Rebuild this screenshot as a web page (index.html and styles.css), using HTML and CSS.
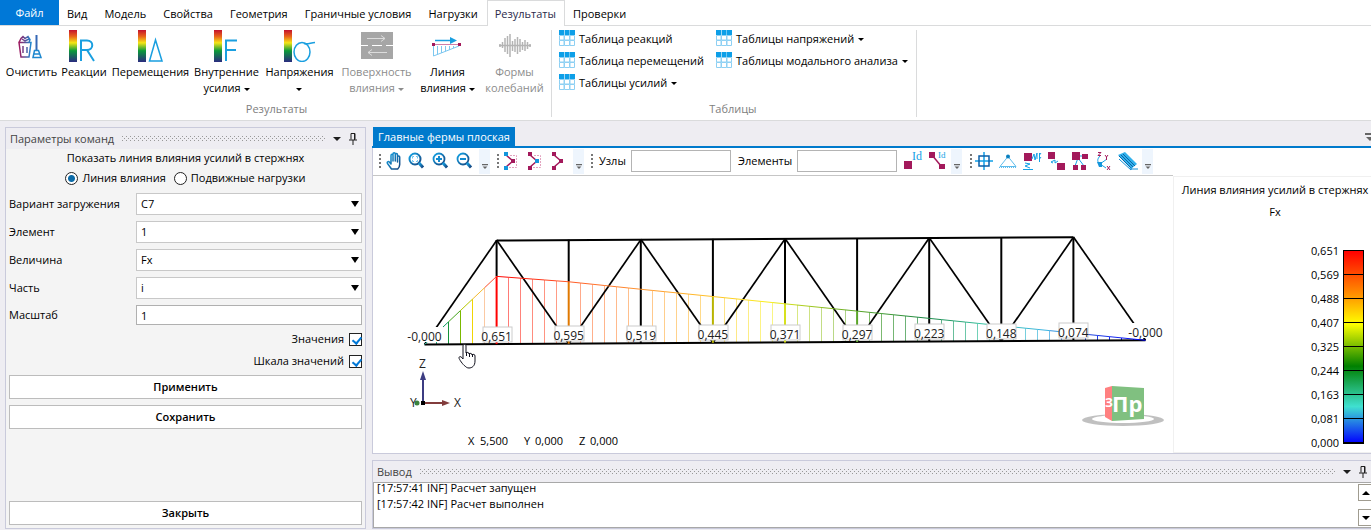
FILE: index.html
```
<!DOCTYPE html>
<html lang="ru">
<head>
    <meta charset="UTF-8">
    <meta name="viewport" content="width=device-width, initial-scale=1.0">
    <title>Главные фермы плоская</title>
    <link rel="stylesheet" href="styles.css">
</head>
<body>

    <!-- Общие значки -->
    <svg class="defs" width="0" height="0" aria-hidden="true">
        <defs>
            <linearGradient id="spectrum" x1="0" y1="0" x2="0" y2="1">
                <stop offset="0" stop-color="#c4122f"/>
                <stop offset=".2" stop-color="#e8641b"/>
                <stop offset=".4" stop-color="#f5e616"/>
                <stop offset=".65" stop-color="#0b9a3a"/>
                <stop offset="1" stop-color="#2b2a80"/>
            </linearGradient>
            <linearGradient id="duo" x1="0" y1="0" x2="1" y2="0">
                <stop offset="0" stop-color="#a0195f"/>
                <stop offset="1" stop-color="#1e88cf"/>
            </linearGradient>
            <linearGradient id="glass" x1="0" y1="0" x2="1" y2="1">
                <stop offset="0" stop-color="#12a5e8"/>
                <stop offset="1" stop-color="#17427c"/>
            </linearGradient>
        </defs>
        <symbol id="i-table" viewBox="0 0 16 16">
            <path fill="#0d9fe8" d="M0 0h5v5H0zM5.600 0h5v5h-5zM11 0h5v5h-5z"/>
            <path fill="none" stroke="#8ed0f3" d="M.5 5.500h4.500v4.500H.5zM5.500 5.500h5v4.500h-5zM11 5.500h4.500v4.500H11zM.5 10.500h4.500v5H.5zM5.500 10.500h5v5h-5zM11 10.500h4.500v5H11z"/>
        </symbol>
        <symbol id="i-pin" viewBox="0 0 8 12">
            <path fill="none" stroke="#1e1e1e" d="M2 6.500V.5h4v6M5.500 1v6M0 7h8M4 7v5"/>
        </symbol>
        <symbol id="i-more" viewBox="0 0 10 8">
            <path fill="#666" d="M0 0h10v2H0zM1 4h8L5 8z"/>
        </symbol>
    </svg>

    <!-- Вкладки ленты -->
    <nav class="tabs">
        <a class="tab tab-file" href="#">Файл</a>
        <a class="tab" href="#">Вид</a>
        <a class="tab" href="#">Модель</a>
        <a class="tab" href="#">Свойства</a>
        <a class="tab" href="#">Геометрия</a>
        <a class="tab" href="#">Граничные условия</a>
        <a class="tab" href="#">Нагрузки</a>
        <a class="tab active" href="#">Результаты</a>
        <a class="tab" href="#">Проверки</a>
    </nav>

    <!-- Лента -->
    <header class="ribbon">
        <section class="group">
            <div class="tools">
                <button class="tool">
                    <svg width="32" height="32" viewBox="0 0 32 32" fill="none" stroke="url(#duo)" stroke-width="1.500">
                        <path d="M3 12.500 5 27h8L15 12.500zM3 12.500l2-4 2-2 2 2 3-2 2 3-1 3M6 9l3 2 4-2M7 16v7M11 17v6"/>
                        <path fill="#3567b5" stroke="none" d="M19.500 5h2v16h-2z"/>
                        <path stroke="#1e88cf" d="M17 27.500l1.500-7h4l2.500 7zM18 24h6"/>
                    </svg>
                    <span>Очистить</span>
                </button>
                <button class="tool">
                    <svg width="32" height="32" viewBox="0 0 32 32">
                        <path fill="url(#spectrum)" d="M1 0h8v32H1z"/>
                        <path fill="none" stroke="#1a9fe0" stroke-width="2" d="M13 31V10.500h6c7 0 7 9.500 0 9.500h-6M19 20l7 11"/>
                    </svg>
                    <span>Реакции</span>
                </button>
                <button class="tool">
                    <svg width="32" height="32" viewBox="0 0 32 32">
                        <path fill="url(#spectrum)" d="M3 0h8v32H3z"/>
                        <path fill="none" stroke="#1a9fe0" stroke-width="1.500" d="M20.500 10 14.500 31h12.500z"/>
                    </svg>
                    <span>Перемещения</span>
                </button>
                <button class="tool">
                    <svg width="32" height="32" viewBox="0 0 32 32">
                        <path fill="url(#spectrum)" d="M3 0h8v32H3z"/>
                        <path fill="none" stroke="#1a9fe0" stroke-width="2" d="M15 31V10.500h11M15 20h10"/>
                    </svg>
                    <span>Внутренние<br>усилия <i class="caret"></i></span>
                </button>
                <button class="tool">
                    <svg width="32" height="32" viewBox="0 0 32 32">
                        <path fill="url(#spectrum)" d="M0 0h8v32H0z"/>
                        <g fill="none" stroke="#1a9fe0" stroke-width="1.500"><ellipse cx="18" cy="22" rx="8" ry="9.500"/><path d="M20 13.500c4 1 7-1 11-1"/></g>
                    </svg>
                    <span>Напряжения<br><i class="caret"></i></span>
                </button>
                <button class="tool" disabled>
                    <svg width="32" height="32" viewBox="0 0 32 32">
                        <path fill="#a6a6a6" d="M0 2h32v27H0z"/>
                        <path fill="none" stroke="#fff" d="M0 15.500h7m4 0h10m4 0h7"/>
                        <path fill="none" stroke="#dcdcdc" d="M6 8.500h18m-4-3 4 3-4 3M26 22.500H7m4-3-4 3 4 3"/>
                    </svg>
                    <span>Поверхность<br>влияния <i class="caret"></i></span>
                </button>
                <button class="tool">
                    <svg width="32" height="32" viewBox="0 0 32 32">
                        <path fill="none" stroke="#7cc7f0" d="M1.500 16v10L27 16M5.500 16v8.500M9.500 16v7M13.500 16v5.500M17.500 16v4M21.500 16v2"/>
                        <path fill="none" stroke="#cf7fa8" d="M1 14.500h26"/>
                        <path fill="#a3195b" d="M0 13h3v3H0zM26 13h3v3h-3z"/>
                        <path fill="none" stroke="#1a9fe0" stroke-width="1.500" d="M3 10.500h17"/>
                        <path fill="#1a9fe0" d="M18 7l7 3.500-7 3.500z"/>
                    </svg>
                    <span>Линия<br>влияния <i class="caret"></i></span>
                </button>
                <button class="tool" disabled>
                    <svg width="32" height="32" viewBox="0 0 32 32">
                        <path fill="none" stroke="#b4b4b4" stroke-width="1.500" d="M1 14v3M3.500 12v6M6 8v14M8.500 6v18M11 4v23M13.500 11v10M16 9v13M18.500 7v17M21 9v13M23.500 12v8M26 10v11M28.500 12v7M31 14v3M0 15.500h32"/>
                    </svg>
                    <span>Формы<br>колебаний</span>
                </button>
            </div>
            <div class="caption">Результаты</div>
        </section>
        <section class="group">
            <div class="tables">
                <button class="row-tool"><svg width="16" height="16"><use href="#i-table"/></svg>Таблица реакций</button>
                <button class="row-tool"><svg width="16" height="16"><use href="#i-table"/></svg>Таблица перемещений</button>
                <button class="row-tool"><svg width="16" height="16"><use href="#i-table"/></svg>Таблицы усилий <i class="caret"></i></button>
                <button class="row-tool"><svg width="16" height="16"><use href="#i-table"/></svg>Таблицы напряжений <i class="caret"></i></button>
                <button class="row-tool"><svg width="16" height="16"><use href="#i-table"/></svg>Таблицы модального анализа <i class="caret"></i></button>
            </div>
            <div class="caption">Таблицы</div>
        </section>
    </header>

    <main class="workspace">

        <!-- Параметры команд -->
        <aside class="panel params">
            <div class="panel-head">
                <span>Параметры команд</span>
                <i class="grip-dots"></i>
                <i class="caret big"></i>
                <svg width="8" height="12"><use href="#i-pin"/></svg>
            </div>
            <form class="form">
                <div class="form-title">Показать линия влияния усилий в стержнях</div>
                <div class="radios">
                    <label><input type="radio" name="mode" checked>Линия влияния</label>
                    <label><input type="radio" name="mode">Подвижные нагрузки</label>
                </div>
                <div class="field">
                    <label for="load">Вариант загружения</label>
                    <div class="select"><select id="load"><option>C7</option></select></div>
                </div>
                <div class="field">
                    <label for="element">Элемент</label>
                    <div class="select"><select id="element"><option>1</option></select></div>
                </div>
                <div class="field">
                    <label for="value">Величина</label>
                    <div class="select"><select id="value"><option>Fx</option></select></div>
                </div>
                <div class="field">
                    <label for="part">Часть</label>
                    <div class="select"><select id="part"><option>i</option></select></div>
                </div>
                <div class="field">
                    <label for="scale">Масштаб</label>
                    <input type="text" id="scale" value="1">
                </div>
                <div class="checks">
                    <label>Значения<input type="checkbox" checked></label>
                    <label>Шкала значений<input type="checkbox" checked></label>
                </div>
                <button type="button" class="btn">Применить</button>
                <button type="button" class="btn">Сохранить</button>
                <button type="button" class="btn btn-close">Закрыть</button>
            </form>
        </aside>

        <div class="content">

            <!-- Документ -->
            <section class="document">
                <div class="doc-tabs">
                    <a class="doc-tab" href="#">Главные фермы плоская</a>
                    <svg class="doc-more" width="10" height="8"><use href="#i-more"/></svg>
                </div>
                <div class="doc-body">
                    <div class="view">
                        <div class="toolbar">
                            <div class="bar">
                                <i class="grip"></i>
                                <button class="icon" title="Сдвиг"><svg viewBox="0 0 20 20"><path fill="none" stroke="url(#glass)" stroke-width="1.500" stroke-linejoin="round" d="M8.500 18 4.500 12.500c-1-1.500.8-2.700 2-1.300L8 13V4.500c0-1.600 2-1.600 2 0V10 3c0-1.600 2.300-1.600 2.300 0v7V3.800c0-1.600 2.200-1.600 2.200 0V11 6c0-1.500 2.200-1.500 2.200 0v7.500c0 2-1 3.500-2 4.500z"/></svg></button>
                                <button class="icon" title="Показать всё"><svg viewBox="0 0 20 20" fill="none" stroke="url(#glass)"><circle cx="8" cy="8" r="5.500" stroke-width="2"/><path stroke-width="3" d="M12 12l4 4.500"/><path stroke="#6cc4ef" d="M5.500 7.500v-2H7m2 0h1.500v2m0 1.500v1.500H9m-2 0H5.500V9"/></svg></button>
                                <button class="icon" title="Увеличить"><svg viewBox="0 0 20 20" fill="none" stroke="url(#glass)"><circle cx="8" cy="8" r="5.500" stroke-width="1.800"/><path stroke-width="3" d="M12 12l4 4.500"/><path stroke="#128bd0" stroke-width="2" d="M5 8h6M8 5v6"/></svg></button>
                                <button class="icon" title="Уменьшить"><svg viewBox="0 0 20 20" fill="none" stroke="url(#glass)"><circle cx="8" cy="8" r="5.500" stroke-width="1.800"/><path stroke-width="3" d="M12 12l4 4.500"/><path stroke="#128bd0" stroke-width="2" d="M5 8h6"/></svg></button>
                                <button class="overflow" title="Ещё"><svg width="6" height="7" viewBox="0 0 10 8"><use href="#i-more"/></svg></button>
                            </div>
                            <div class="bar">
                                <i class="grip"></i>
                                <button class="icon" title="Выбор узлов"><svg viewBox="0 0 20 20"><path fill="none" stroke="#e2a3bf" stroke-dasharray="2 1" d="M9 4.500h6.500v12H7"/><path fill="none" stroke="#a3195b" stroke-width="1.500" d="M5 4l7 6-7 6"/><path fill="#1496dc" d="M3 1h4v4H3zM3 15h4v4H3z"/><path fill="#a3195b" d="M10 8h4v4h-4z"/></svg></button>
                                <button class="icon" title="Выбор элементов"><svg viewBox="0 0 20 20"><path fill="none" stroke="#e2a3bf" stroke-dasharray="2 1" d="M9 4.500h6.500v12H7"/><path fill="none" stroke="#a3195b" stroke-width="1.500" d="M5 4l7 6-7 6"/><path fill="#a3195b" d="M3 1h4v4H3zM3 15h4v4H3z"/><path fill="#1496dc" d="M10 8h4v4h-4z"/></svg></button>
                                <button class="icon" title="Снять выбор"><svg viewBox="0 0 20 20"><path fill="none" stroke="#a3195b" stroke-width="1.500" d="M5 4l7 6-7 6"/><path fill="#a3195b" d="M3 1h4v4H3zM3 15h4v4H3zM10 8h4v4h-4z"/></svg></button>
                                <button class="overflow" title="Ещё"><svg width="6" height="7" viewBox="0 0 10 8"><use href="#i-more"/></svg></button>
                            </div>
                            <div class="bar bar-find">
                                <i class="grip"></i>
                                <label for="nodes">Узлы</label>
                                <input type="text" id="nodes">
                                <label for="elements">Элементы</label>
                                <input type="text" id="elements">
                                <button class="icon" title="Номера узлов"><svg viewBox="0 0 20 20"><path fill="#a3195b" d="M1 10h8v8H1z"/><text class="id-text" x="9" y="9">Id</text></svg></button>
                                <button class="icon" title="Номера элементов"><svg viewBox="0 0 20 20"><path stroke="#a3195b" stroke-width="1.500" d="M5 4l9 11"/><path fill="#a3195b" d="M2 1h6v6H2zM12 13h6v5h-6z"/><text class="id-text small" x="11" y="7">Id</text></svg></button>
                                <button class="overflow" title="Ещё"><svg width="6" height="7" viewBox="0 0 10 8"><use href="#i-more"/></svg></button>
                            </div>
                            <div class="bar">
                                <i class="grip"></i>
                                <button class="icon" title="Узлы"><svg viewBox="0 0 20 20" fill="none" stroke="#12a0e6"><path stroke-width="1.500" d="M10 1v18M1 10h18"/><path stroke="#0a5fa8" stroke-width="1.500" d="M5 5h10v10H5z"/></svg></button>
                                <button class="icon" title="Опоры"><svg viewBox="0 0 20 20"><path fill="none" stroke="#5dbcec" d="M10 5.500 2 15.500h16z"/><path fill="none" stroke="#5dbcec" stroke-dasharray="1 1" d="M1 16.500h18"/><circle cx="10" cy="5.500" r="2" fill="#0a80c0"/></svg></button>
                                <button class="icon" title="Связи"><svg viewBox="0 0 20 20"><path fill="#a3195b" d="M2 2h8v8H2z"/><path fill="none" stroke="#12a0e6" d="M3 12l5 1-5 2 5 2M1 18.500h10M10 8l2-5 1 6 2-7v6M17.500 2v9M19 2l-1.500 2M19 6l-1.500 2"/></svg></button>
                                <button class="icon" title="Шарниры"><svg viewBox="0 0 20 20"><path fill="#a3195b" d="M2 1h7v7H2zM11 12h8v7h-8z"/><path fill="none" stroke="#12a0e6" d="M5 11l4-2 0 3 3-2M5 11l2 1"/></svg></button>
                                <button class="icon" title="Жёсткие связи"><svg viewBox="0 0 20 20"><path stroke="#12a0e6" d="M8 7l-3 8M8 7l6 8M8 5h8"/><path fill="#a3195b" d="M2 1h8v8H2zM12 3h6v5h-6zM3 14h5v5H3zM11 14h5v5h-5z"/></svg></button>
                                <button class="icon" title="Местные оси"><svg viewBox="0 0 20 20"><path fill="none" stroke="#12a0e6" d="M6 5C3 8 3 11 6 13l7-5M6 13l6 4"/><path fill="#1496dc" d="M3 11h5v5H5z"/><path fill="none" stroke="#a3195b" d="M4 1.500h3L4 4.500h3M11 4l1.500 2L14 4M12.500 6v3M13 15l3 4M16 15l-3 4"/></svg></button>
                                <button class="icon" title="Сечения"><svg viewBox="0 0 20 20"><path fill="#31b1ec" d="M0 4l7-3 12 12-6 5z"/><path fill="none" stroke="#0b65a5" d="M1 5l12 12M3 4l12 12M5 3l12 12"/><path fill="none" stroke="#1490d6" d="M1 8l12 11v-3M13 18h7"/></svg></button>
                                <button class="overflow" title="Ещё"><svg width="6" height="7" viewBox="0 0 10 8"><use href="#i-more"/></svg></button>
                            </div>
                        </div>

                        <!-- Расчетная схема -->
                        <svg class="scene" id="scene" viewBox="0 0 800 277" preserveAspectRatio="xMinYMin meet">
                            <g id="hatch"></g>
                            <g id="truss"></g>
                            <g id="labels"></g>

                            <!-- Оси -->
                            <path stroke="#3c3c82" stroke-width="2" d="M50 227v-24"/>
                            <path fill="#3c3c82" d="M47 204l3-9 3 9z"/>
                            <path stroke="#823c3c" stroke-width="2" d="M50 227h20"/>
                            <path fill="#823c3c" d="M69 224l8 3-8 3z"/>
                            <circle cx="44" cy="227" r="2.500" fill="#3c823c"/>
                            <path fill="#000" d="M48 225h4v4h-4z"/>
                            <g class="axes">
                                <text x="46" y="192">Z</text>
                                <text x="81" y="231">X</text>
                                <text x="37" y="231">Y</text>
                            </g>

                            <!-- Видовой куб -->
                            <path fill="#c0c0c0" fill-rule="evenodd" d="M709 244a41 6 0 1 0 82 0a41 6 0 1 0-82 0zM719 243a31 4 0 1 0 62 0a31 4 0 1 0-62 0z"/>
                            <path fill="#ff8080" d="M732 212l7-2v35l-7-4z"/>
                            <path fill="#80c080" d="M739 210l32 2v31l-32 2z"/>
                            <text class="cube-front" x="739" y="236">Пр</text>
                            <text class="cube-side" x="732" y="231">З</text>

                            <!-- Координаты -->
                            <g class="coords">
                                <text x="95" y="269">X</text><text x="107" y="269">5,500</text>
                                <text x="151" y="269">Y</text><text x="162" y="269">0,000</text>
                                <text x="206" y="269">Z</text><text x="217" y="269">0,000</text>
                            </g>

                            <!-- Курсор -->
                            <path fill="#fff" stroke="#10101c" stroke-linejoin="round" d="M92 190c-2-1-6-7-6-8 0-2 2-2 4 1v-13c0-2 3-2 3 0v7c1-1 3-1 3 1 1-1 3-1 3 1 1-1 3-1 3 1v5c0 5-3 7-6 7-2 0-3-1-4-2z"/>
                            <path fill="none" stroke="#10101c" d="M93.500 176v4M96.500 177v4M99.500 178v3"/>
                        </svg>
                    </div>

                    <!-- Шкала значений -->
                    <div class="legend">
                        <div class="legend-title">Линия влияния усилий в стержнях</div>
                        <div class="legend-title">Fx</div>
                        <div class="legend-scale">
                            <ol class="legend-values">
                                <li>0,651</li>
                                <li>0,569</li>
                                <li>0,488</li>
                                <li>0,407</li>
                                <li>0,325</li>
                                <li>0,244</li>
                                <li>0,163</li>
                                <li>0,081</li>
                                <li>0,000</li>
                            </ol>
                            <div class="legend-bar"></div>
                        </div>
                    </div>
                </div>
            </section>

            <!-- Вывод -->
            <section class="panel output">
                <div class="panel-head">
                    <span>Вывод</span>
                    <i class="grip-dots"></i>
                    <i class="caret big"></i>
                    <svg width="8" height="12"><use href="#i-pin"/></svg>
                </div>
                <div class="log">
                    <div class="log-lines">
                        <div>[17:57:41 INF] Расчет запущен</div>
                        <div>[17:57:42 INF] Расчет выполнен</div>
                    </div>
                    <div class="scroll">
                        <button title="Вверх"><i class="caret big up"></i></button>
                        <button title="Вниз"><i class="caret big"></i></button>
                    </div>
                </div>
            </section>
        </div>
    </main>

    <script src="scene.js"></script>
</body>
</html>
```
FILE: styles.css
```
* {
    box-sizing: border-box;
}

html, body {
    height: 100%;
    margin: 0;
}

body {
    display: flex;
    flex-direction: column;
    overflow: hidden;
    background: #eeedf2;
    font-family: "Open Sans", "Noto Sans", sans-serif;
    font-size: 11px;
    line-height: 16px;
    color: #000;
}

button, input, select {
    font: inherit;
    color: inherit;
    border-radius: 0;
}

button {
    padding: 0;
    border: none;
    background: none;
}

a {
    color: inherit;
    text-decoration: none;
}

svg {
    display: block;
    flex: none;
}

.defs {
    position: absolute;
}

/* Треугольник выпадающего списка */
.caret {
    display: inline-block;
    flex: none;
    border: 3px solid transparent;
    border-top-color: currentColor;
    border-bottom: none;
    vertical-align: middle;
}

.caret.big {
    border-width: 4px 4px 0;
}

.caret.up {
    border-top: none;
    border-bottom: 4px solid #000;
}

/* Вкладки */
.tabs {
    display: flex;
    height: 26px;
    background: #fff;
    border-bottom: 1px solid #dadbdc;
}

.tab {
    height: 26px;
    padding: 5px 8px 0 7px;
    border: 1px solid transparent;
    border-bottom: none;
    white-space: nowrap;
}

.tab-file {
    width: 59px;
    height: 25px;
    padding: 4px 0 0;
    background: #0078d7;
    color: #fff;
    text-align: center;
}

.tab.active {
    background: #fff;
    border-color: #dadbdc;
    color: #2b2b4b;
}

/* Лента */
.ribbon {
    display: flex;
    padding: 4px 0 3px 4px;
    background: #fff;
    border-bottom: 1px solid #dadbdc;
}

.group {
    display: flex;
    flex-direction: column;
    height: 87px;
    padding-right: 2px;
    border-right: 1px solid #dadbdc;
}

.tools {
    display: grid;
    grid-template-columns: 55px 50px 83px 69px 77px 77px 65px 69px;
}

.tool {
    display: flex;
    flex-direction: column;
    align-items: center;
    gap: 2px;
    white-space: nowrap;
}

.tool:disabled {
    color: #8c8c8c;
}

.tables {
    display: grid;
    grid-template-rows: repeat(3, 22px);
    grid-auto-flow: column;
    grid-auto-columns: max-content;
    column-gap: 12px;
    padding: 0 6px 0 7px;
}

.row-tool {
    display: flex;
    gap: 4px;
    line-height: 18px;
    white-space: nowrap;
}

.row-tool .caret {
    margin-top: 8px;
}

.caption {
    margin-top: auto;
    text-align: center;
    color: #808080;
}

/* Рабочая область */
.workspace {
    display: flex;
    flex: 1;
    gap: 6px;
    min-height: 0;
    padding: 6px 0 1px 5px;
}

.panel {
    display: flex;
    flex-direction: column;
    border: 1px solid #c9cadb;
}

.panel-head {
    display: flex;
    flex: none;
    align-items: center;
    gap: 8px;
    height: 21px;
    padding: 0 8px 0 4px;
    color: #444;
}

.panel-head .caret {
    color: #1e1e1e;
}

.grip-dots {
    flex: 1;
    height: 5px;
    background-image:
        conic-gradient(from 270deg at 1px 1px, #999 90deg, transparent 0),
        conic-gradient(from 270deg at 1px 1px, #999 90deg, transparent 0);
    background-size: 4px 4px;
    background-position: 0 0, 2px 2px;
}

/* Параметры команд */
.params {
    flex: none;
    width: 361px;
    background: #f4f4f4;
}

.params .panel-head {
    background: #eeedf2;
}

.form {
    display: flex;
    flex: 1;
    flex-direction: column;
    padding: 1px 3px 3px;
}

.form-title {
    text-align: center;
}

.radios {
    display: flex;
    justify-content: center;
    gap: 8px;
    margin: 4px 0 7px;
}

.radios label {
    display: flex;
    gap: 4px;
}

.radios input {
    appearance: none;
    width: 13px;
    height: 13px;
    margin: 2px 0 0;
    border: 1px solid #222;
    border-radius: 50%;
    background: #fff;
}

.radios input:checked {
    background: radial-gradient(circle, #0c6ba8 3px, #fff 4px);
}

.field {
    display: grid;
    grid-template-columns: 127px 1fr;
    align-items: center;
    margin-bottom: 6px;
}

.field input,
.select select {
    width: 100%;
    height: 22px;
    padding: 0 4px;
    border: 1px solid #c8c8c8;
    background: #fff;
    outline: none;
}

.field input {
    height: 20px;
    border-color: #b0b0b0;
}

.select {
    position: relative;
}

.select select {
    display: block;
    appearance: none;
}

.select::after {
    content: "";
    position: absolute;
    top: 8px;
    right: 3px;
    border: 4px solid transparent;
    border-top: 6px solid #000;
    border-bottom: none;
    pointer-events: none;
}

.checks {
    display: flex;
    flex-direction: column;
    align-items: flex-end;
    gap: 6px;
    margin-bottom: 6px;
}

.checks label {
    display: flex;
    align-items: center;
    gap: 5px;
}

.checks input {
    appearance: none;
    position: relative;
    width: 13px;
    height: 13px;
    margin: 0;
    border: 1px solid #222;
    background: #fff;
}

.checks input:checked::after {
    content: "";
    position: absolute;
    top: 1px;
    left: 4px;
    width: 4px;
    height: 7px;
    border: solid #0078d7;
    border-width: 0 2px 2px 0;
    transform: rotate(40deg);
}

.btn {
    height: 24px;
    margin-bottom: 6px;
    border: 1px solid #bcbcbc;
    background: #fff;
    font-weight: 600;
}

.btn-close {
    margin: auto 0 0;
}

/* Документ */
.content {
    display: flex;
    flex: 1;
    flex-direction: column;
    gap: 6px;
    min-width: 0;
}

.document {
    display: flex;
    flex: 1;
    flex-direction: column;
    min-height: 0;
}

.doc-tabs {
    display: flex;
    align-items: center;
    justify-content: space-between;
    height: 21px;
    padding-left: 1px;
    overflow: hidden;
    border-bottom: 2px solid #007acc;
}

.doc-tab {
    height: 19px;
    padding: 2px 5px;
    background: #007acc;
    color: #fff;
}

.doc-more {
    margin-right: -4px;
}

.doc-body {
    display: flex;
    flex: 1;
    min-height: 0;
    border: 1px solid #c9cadb;
    border-width: 0 0 1px 1px;
    background: #fff;
}

.view {
    display: flex;
    flex: 1;
    flex-direction: column;
    min-width: 0;
}

/* Панель инструментов */
.toolbar {
    display: flex;
    flex: none;
    gap: 5px;
    height: 28px;
    padding: 0 0 1px 4px;
    border-bottom: 1px solid #c6c6c6;
}

.bar {
    display: flex;
    align-items: center;
}

.grip {
    width: 6px;
    height: 14px;
    background: repeating-linear-gradient(#777 0 2px, transparent 2px 4px) center / 2px 100% no-repeat;
}

.icon {
    width: 24px;
    height: 20px;
}

.icon svg {
    width: 20px;
    height: 20px;
    overflow: visible;
}

.id-text {
    font: 12px "Liberation Serif", serif;
    fill: #12a0e6;
}

.id-text.small {
    font-size: 9px;
}

.overflow {
    display: flex;
    align-items: flex-end;
    justify-content: center;
    width: 11px;
    height: 25px;
    padding-bottom: 4px;
    background: #eef5fd;
}

.bar-find {
    display: grid;
    grid-template-columns: 10px 32px 100px 66px 100px 6px 24px 24px 12px;
}

.bar-find .icon {
    grid-column: 7;
}

.bar-find .icon + .icon {
    grid-column: 8;
}

.bar input + label {
    padding-left: 7px;
}

.bar input {
    height: 22px;
    border: 1px solid #b4b4b4;
    outline: none;
}

/* Схема */
.scene {
    flex: 1;
    width: 100%;
    min-height: 0;
}

.scene text {
    font-size: 12px;
    fill: #222;
}

.scene .coords text {
    font-size: 11px;
    fill: #000;
}

.scene .cube-front {
    font-size: 22px;
    font-weight: 700;
    fill: #fff;
}

.scene .cube-side {
    font-size: 12px;
    font-weight: 700;
    fill: #fff;
}

/* Шкала */
.legend {
    flex: none;
    width: 198px;
    margin-top: 28px;
    padding: 5px 0 0 5px;
    border: 1px solid #f0f0f0;
    border-right: none;
}

.legend-title {
    margin-bottom: 6px;
    text-align: center;
    white-space: nowrap;
}

.legend-scale {
    display: flex;
    justify-content: flex-end;
    gap: 4px;
    padding: 13px 7px 0 0;
}

.legend-values {
    margin: 0;
    padding: 0;
    list-style: none;
    text-align: right;
}

.legend-values li {
    height: 24px;
    line-height: 24px;
}

.legend-bar {
    width: 21px;
    height: 194px;
    margin-top: 11px;
    border: 1px solid #000;
    background:
        repeating-linear-gradient(transparent 0 23px, #000 23px 24px),
        linear-gradient(#f00 0%, #ff8c00 22%, #ff0 38%, #008000 60%, #40e0d0 81%, #00f 100%);
}

/* Вывод */
.output {
    flex: none;
    height: 69px;
    border-right: none;
}

.output .panel-head {
    padding-right: 4px;
}

.log {
    display: flex;
    flex: 1;
    justify-content: space-between;
    overflow: hidden;
    border: 1px solid #a8a8a8;
    border-right: none;
    background: #fff;
}

.log-lines {
    margin-top: -3px;
    padding-left: 3px;
}

.scroll {
    display: flex;
    flex-direction: column;
    justify-content: space-between;
    margin-right: -3px;
    padding: 1px 0;
}

.scroll button {
    display: flex;
    align-items: center;
    justify-content: center;
    width: 16px;
    height: 17px;
    border: 1px solid #a09c90;
}
```
FILE: scene.js
```
var NS = "http://www.w3.org/2000/svg";
var STEP = 72.1;          // длина панели
var LEFT = 51.5;          // левая опора
var values = [0, 0.651, 0.595, 0.519, 0.445, 0.371, 0.297, 0.223, 0.148, 0.074, 0];

// цвета эпюры: позиция по длине и цвет
var stops = [
    [0, 64, 224, 208], [0.3, 0, 140, 70], [0.5, 122, 184, 0], [0.66, 240, 215, 0],
    [0.83, 248, 160, 90], [1, 255, 0, 0], [2, 255, 90, 40], [3, 255, 150, 50],
    [4, 255, 195, 40], [4.8, 250, 240, 30], [5.2, 180, 210, 30], [6, 90, 165, 40],
    [7, 25, 135, 70], [7.8, 60, 200, 170], [8.6, 60, 180, 225], [9.1, 40, 80, 220], [10, 0, 0, 255]
];

function add(parent, name, attrs, text) {
    var el = document.createElementNS(NS, name);
    for (var key in attrs) {
        el.setAttribute(key, attrs[key]);
    }
    if (text) {
        el.textContent = text;
    }
    document.getElementById(parent).appendChild(el);
}

function line(parent, x1, y1, x2, y2, color, width) {
    add(parent, "line", { x1: x1, y1: y1, x2: x2, y2: y2, stroke: color, "stroke-width": width });
}

function nodeX(i) { return LEFT + STEP * i; }
function bottomY(i) { return 168.5 - 0.42 * i; }
function topY(i) { return 64.5 - 0.4 * i; }

function curveY(t) {
    var i = Math.min(Math.floor(t), 9);
    var v = values[i] + (values[i + 1] - values[i]) * (t - i);
    return bottomY(t) - v * 104;
}

function colorAt(t, mix) {
    var k = 0;
    while (k < stops.length - 2 && stops[k + 1][0] < t) {
        k++;
    }
    var a = stops[k], b = stops[k + 1];
    var f = (t - a[0]) / (b[0] - a[0]);
    var rgb = [1, 2, 3].map(function (n) {
        var c = a[n] + (b[n] - a[n]) * f;
        return Math.round(c + (255 - c) * mix);
    });
    return "rgb(" + rgb.join(",") + ")";
}

// пояса
line("truss", nodeX(0), bottomY(0), nodeX(10), bottomY(10), "#000", 2);
line("truss", nodeX(1), topY(0), nodeX(9), topY(8), "#000", 2);

// раскосы и стойки
for (var i = 0; i < 10; i++) {
    var up = i % 2 === 0;
    line("truss", nodeX(i), up ? bottomY(i) : topY(i), nodeX(i + 1), up ? topY(i) : bottomY(i + 1), "#000", 1.7);
}
for (i = 1; i < 10; i++) {
    var colored = [1, 2, 4, 5, 6].indexOf(i) >= 0;
    line("truss", nodeX(i), topY(i), nodeX(i), colored ? curveY(i) : bottomY(i), "#000", 2);
    if (colored) {
        line("truss", nodeX(i), curveY(i), nodeX(i), bottomY(i), i === 2 ? "#e07800" : i === 4 ? "#b8b400" : colorAt(i, 0), 2);
    }
}

// эпюра
for (var n = 1; n < 60; n++) {
    var t = n / 6;
    if (n % 6) {
        var pale = n < 5 || t > 9 ? 0 : t > 6 ? 0.3 : 0.45;
        var x = Math.round(nodeX(t) - 0.5) + 0.5;
        line("hatch", x, curveY(t), x, bottomY(t), colorAt(t, pale), 1);
    }
}
for (n = 0; n < 60; n++) {
    line("truss", nodeX(n / 6), curveY(n / 6), nodeX((n + 1) / 6), curveY((n + 1) / 6), colorAt((n + 0.5) / 6, 0), 1);
}

// подписи значений
for (i = 0; i <= 10; i++) {
    var edge = i === 0 || i === 10;
    var text = (edge ? "-" : "") + values[i].toFixed(3).replace(".", ",");
    var cx = nodeX(i);
    add("labels", "rect", {
        x: Math.round(edge ? cx - 16 : cx - 14), y: Math.round(151 - 0.4 * i),
        width: edge ? 34 : 29, height: 15, fill: "#fff", stroke: edge ? "none" : "#ccc"
    });
    add("labels", "text", { x: cx, y: Math.round(165 - 0.4 * i), "text-anchor": "middle" }, text);
}
```
